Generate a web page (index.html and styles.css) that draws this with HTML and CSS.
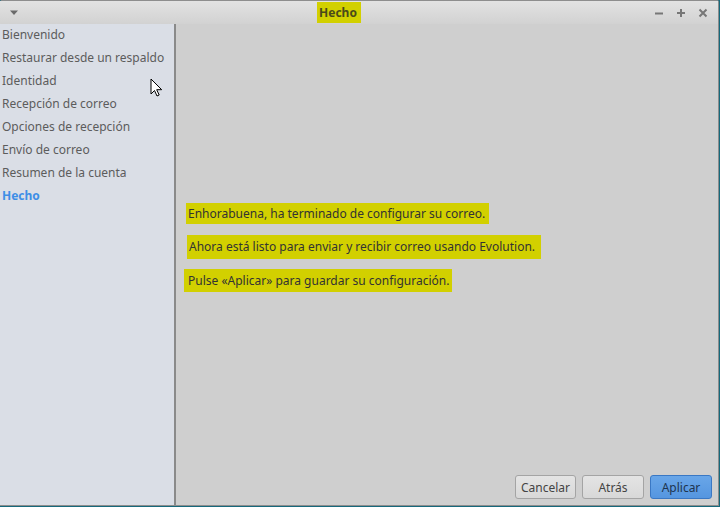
FILE: index.html
```html
<!DOCTYPE html>
<html lang="es">
<head>
<meta charset="utf-8">
<title>Hecho</title>
<link rel="stylesheet" href="styles.css">
</head>
<body>
<div class="window">
  <div class="titlebar">
    <svg class="menu-arrow" width="10" height="6" viewBox="0 0 10 6"><path d="M1 0.5h8L5 5z" fill="#6a6a6a"/></svg>
    <div class="title"><span class="hl hl-title">Hecho</span></div>
    <div class="controls">
      <svg width="10" height="10" viewBox="0 0 10 10"><path d="M1 5.5h8" stroke="#777" stroke-width="2"/></svg>
      <svg width="10" height="10" viewBox="0 0 10 10"><path d="M1 5h8M5 1v8" stroke="#777" stroke-width="2"/></svg>
      <svg width="10" height="10" viewBox="0 0 10 10"><path d="M1.5 1.5l7 7M8.5 1.5l-7 7" stroke="#777" stroke-width="2"/></svg>
    </div>
  </div>
  <div class="body">
    <nav class="sidebar">
      <div class="item">Bienvenido</div>
      <div class="item">Restaurar desde un respaldo</div>
      <div class="item">Identidad</div>
      <div class="item">Recepción de correo</div>
      <div class="item">Opciones de recepción</div>
      <div class="item">Envío de correo</div>
      <div class="item">Resumen de la cuenta</div>
      <div class="item active">Hecho</div>
    </nav>
    <main class="main">
      <div class="content">
        <p class="line l1"><span class="hl">Enhorabuena, ha terminado de configurar su correo.</span></p>
        <p class="line l2"><span class="hl">Ahora está listo para enviar y recibir correo usando Evolution.</span></p>
        <p class="line l3"><span class="hl">Pulse «Aplicar» para guardar su configuración.</span></p>
      </div>
      <div class="buttons">
        <button class="btn">Cancelar</button>
        <button class="btn">Atrás</button>
        <button class="btn primary">Aplicar</button>
      </div>
    </main>
  </div>
</div>
<svg class="cursor" width="14" height="20" viewBox="0 0 14 20"><path d="M1 1v15l3.5-3.5 2.5 5.5 2.2-1-2.5-5.3h5z" fill="#fff" stroke="#000" stroke-width="1"/></svg>
</body>
</html>
```
FILE: styles.css
```css
html, body {
  margin: 0;
  padding: 0;
}
body {
  width: 720px;
  height: 507px;
  background: #16697c;
  font-family: "Noto Sans", "Open Sans", sans-serif;
  font-size: 12px;
  position: relative;
  overflow: hidden;
}
.window {
  width: 718px;
  height: 504px;
  border-top: 1px solid #8d8d8d;
  border-right: 1px solid #8d8d8d;
  border-bottom: 1px solid #8d8d8d;
  border-top-left-radius: 2px;
  border-top-right-radius: 2px;
  background: #cfcfcf;
  display: flex;
  flex-direction: column;
}
.titlebar {
  height: 23px;
  background: linear-gradient(#e2e2e2, #d2d2d2);
  display: flex;
  align-items: center;
  position: relative;
}
.menu-arrow {
  margin-left: 9px;
}
.title {
  position: absolute;
  left: 0;
  right: 0;
  top: 0;
  bottom: 0;
  display: flex;
  align-items: center;
  justify-content: center;
  font-weight: bold;
  color: #4a4a1a;
  padding-right: 40px;
}
.hl-title {
  padding: 3px 5px 2px 3px;
}
.controls {
  margin-left: auto;
  margin-right: 10px;
  display: flex;
  gap: 12px;
}
.body {
  flex: 1;
  display: flex;
  min-height: 0;
}
.sidebar {
  width: 174px;
  background: #dadee6;
  border-right: 2px solid #8a8a8a;
  padding-top: 1px;
  display: flex;
  flex-direction: column;
}
.item {
  height: 23px;
  line-height: 19px;
  padding-left: 2px;
  color: #5c5c5c;
  white-space: nowrap;
}
.item.active {
  color: #3d8ee6;
  font-weight: bold;
}
.main {
  flex: 1;
  display: flex;
  flex-direction: column;
}
.content {
  flex: 1;
  padding-top: 181px;
  padding-left: 10px;
}
.line {
  margin: 0;
  color: #333;
  height: 17px;
  line-height: 17px;
}
.l2 {
  margin-top: 16px;
  padding-left: 1px;
}
.l3 {
  margin-top: 17px;
  padding-left: 0;
}
.hl {
  background: #d2d000;
  padding: 2px 4px 2px 2px;
}
.l2 .hl {
  padding: 3px 6px 4px 2px;
}
.l3 .hl {
  padding: 3px 3px 3px 4px;
  margin-left: -2px;
}
.buttons {
  display: flex;
  justify-content: flex-end;
  gap: 6px;
  padding: 0 6px 6px 0;
}
.btn {
  font-family: inherit;
  font-size: 12px;
  height: 24px;
  width: 62px;
  padding: 0;
  border: 1px solid #a4a4a4;
  border-radius: 3px;
  background: linear-gradient(#e4e4e4, #d8d8d8);
  color: #444;
}
.btn:first-child {
  width: 61px;
}
.btn.primary {
  background: linear-gradient(#69a6e8, #5596e0);
  border-color: #3a78c4;
  color: #1e3550;
}
.cursor {
  position: absolute;
  left: 150px;
  top: 78px;
}
```
